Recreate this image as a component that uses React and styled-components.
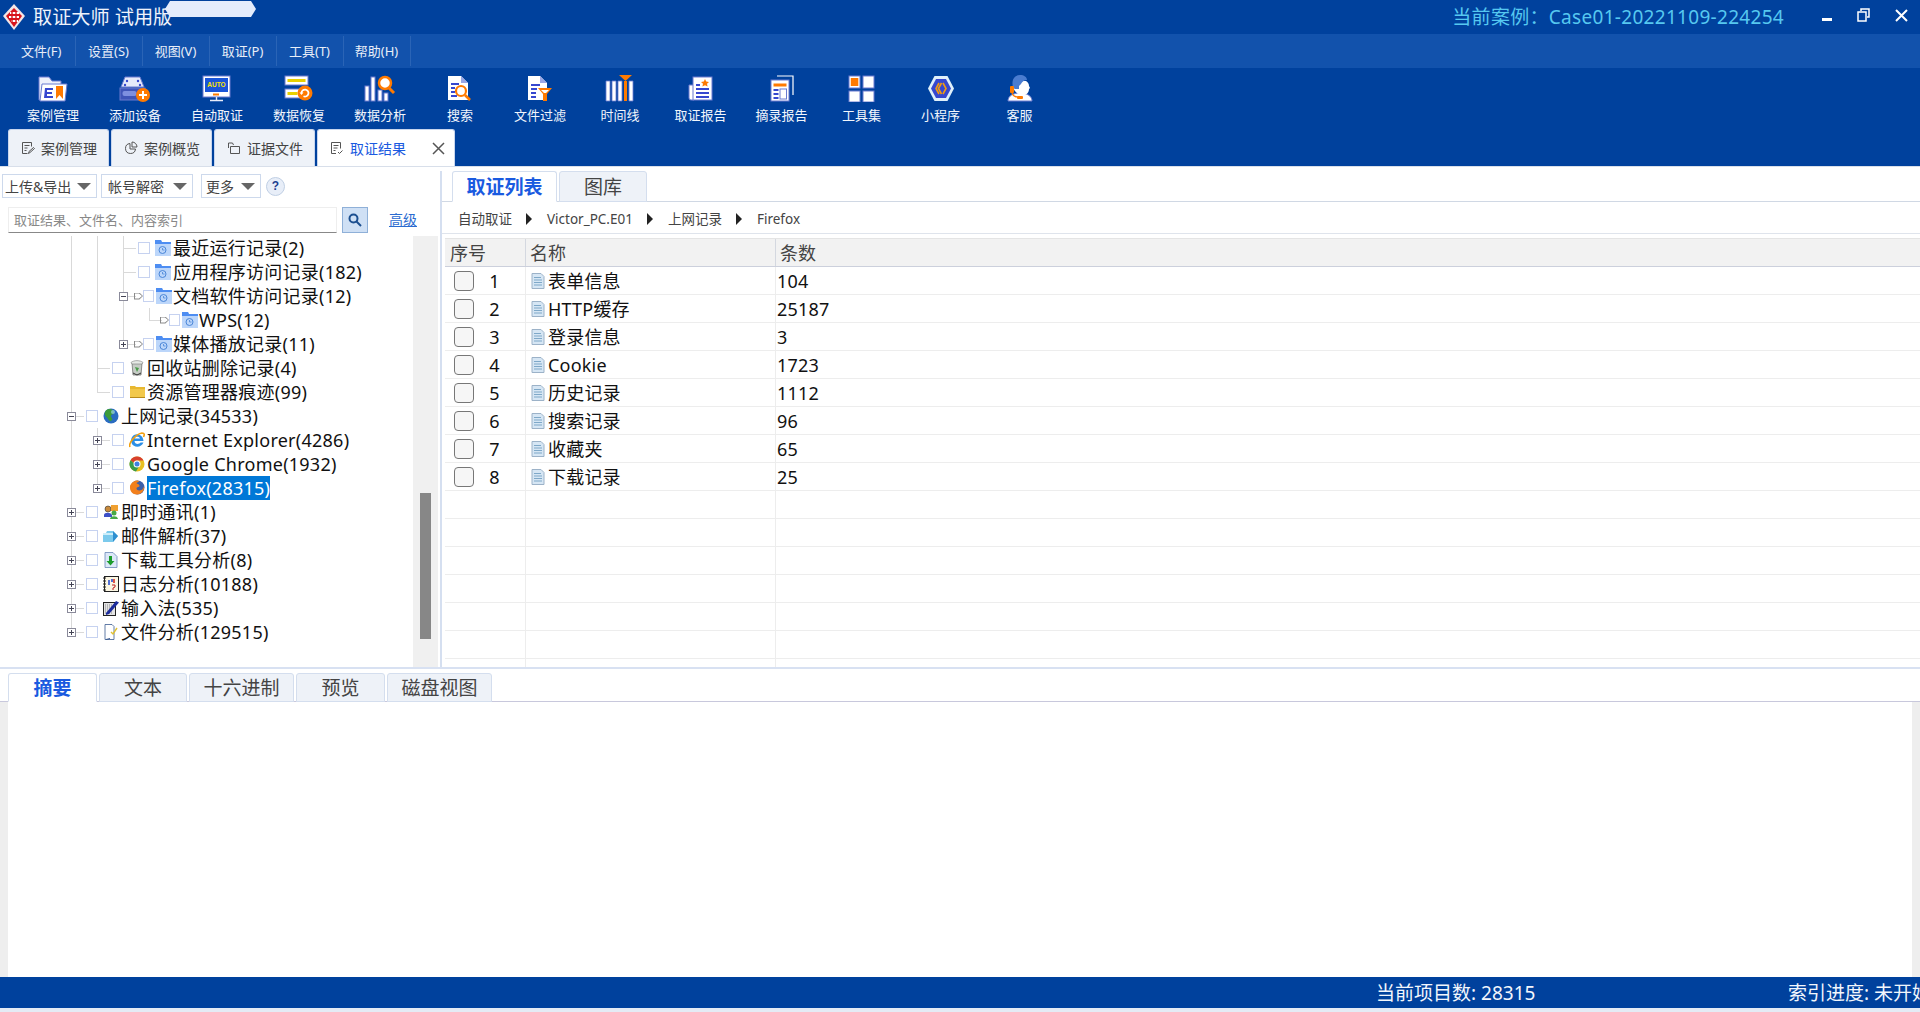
import React from "react";
import styled, { createGlobalStyle } from "styled-components";

const BLUE = "#00419d";
const LINE = "#6a7bd0";
const ORANGE = "#ff7a00";
const INK = "#3647cf";

const GlobalStyle = createGlobalStyle`
  html, body { margin: 0; padding: 0; background: #fff; }
  body { font-family: "Noto Sans", "Noto Sans CJK SC", sans-serif; color: #111; }
  * { box-sizing: border-box; }
`;

const Logo = () => (
  <svg width="24" height="28" viewBox="0 0 24 28">
    <path d="M11 1 L22 13 L11 27 L0 13Z" fill="#f4e6e6" />
    <path d="M11 5 L19 13 L11 24 L3 13Z" fill="#d8141c" />
    <path d="M7 10h9M6 14h10M8 18h7" stroke="#fff" strokeWidth="2" />
    <path d="M9 8v12M13 8v12" stroke="#d8141c" strokeWidth="1.4" />
  </svg>
);

const CaseIcon = () => (
  <svg width="30" height="26" viewBox="0 0 30 26">
    <path d="M1 1H11L14 5H23V24H1Z" fill="#eef1fb" stroke={LINE} />
    <path d="M4 8H29L27 25H2Z" fill="#fff" stroke={LINE} />
    <path d="M7 12h8v2H9v2h5v2H9v2h6v2H6Z" fill={INK} />
    <path d="M18 10h7v13l-3.5-4-3.5 4Z" fill={ORANGE} />
  </svg>
);
const DeviceIcon = () => (
  <svg width="32" height="26" viewBox="0 0 32 26">
    <path d="M6 1H21L25 11H2Z" fill="#e6eafa" stroke={LINE} />
    <circle cx="8" cy="5" r="1.2" fill={INK} />
    <circle cx="19" cy="5" r="1.2" fill={INK} />
    <circle cx="6" cy="9" r="1.2" fill={INK} />
    <circle cx="21" cy="9" r="1.2" fill={INK} />
    <rect x="1" y="12" width="25" height="12" fill="#3f54b8" stroke={LINE} />
    <rect x="3.5" y="15" width="14" height="5" rx="2" fill="#7e8fe0" />
    <circle cx="24" cy="19" r="7" fill={ORANGE} />
    <path d="M24 15v8M20 19h8" stroke="#fff" strokeWidth="2" />
  </svg>
);
const AutoIcon = () => (
  <svg width="30" height="27" viewBox="0 0 30 27">
    <rect x="1" y="1" width="27" height="21" fill="#fff" stroke={LINE} />
    <rect x="3" y="3" width="23" height="14" fill="#1a55d8" />
    <text x="14.5" y="12" fontSize="6.5" fontWeight="700" fill="#ffe400" textAnchor="middle" fontFamily="Liberation Sans, sans-serif">AUTO</text>
    <rect x="11" y="18.5" width="6" height="2" fill={ORANGE} />
    <path d="M14.5 22v3M8 25.5h13" stroke="#e8ecfa" strokeWidth="1.4" />
  </svg>
);
const RecoverIcon = () => (
  <svg width="30" height="27" viewBox="0 0 30 27">
    <rect x="1" y="1" width="23" height="9" fill="#fff" stroke={LINE} />
    <rect x="3.5" y="4" width="18" height="3" fill="#e8d000" />
    <rect x="1" y="14" width="23" height="9" fill="#fff" stroke={LINE} />
    <rect x="3.5" y="17" width="10" height="3" fill="#e8d000" />
    <circle cx="21" cy="18" r="7.5" fill={ORANGE} />
    <path d="M17.5 18a3.5 3.5 0 1 1 2 3.2" fill="none" stroke="#fff" strokeWidth="1.8" />
    <path d="M15.5 17.5h4l-2 2.500Z" fill="#fff" />
  </svg>
);
const AnalysisIcon = () => (
  <svg width="32" height="27" viewBox="0 0 32 27">
    <rect x="1" y="11" width="4" height="15" fill="#fff" stroke={LINE} />
    <rect x="7" y="2" width="4" height="24" fill="#fff" stroke={LINE} />
    <rect x="14" y="15" width="4" height="11" fill="#fff" stroke={LINE} />
    <rect x="20" y="18" width="4" height="8" fill="#fff" stroke={LINE} />
    <circle cx="21" cy="8" r="6" fill="#fff" stroke={ORANGE} strokeWidth="2.5" />
    <path d="M25 13l5 5" stroke={ORANGE} strokeWidth="3" />
  </svg>
);
const SearchDocIcon = () => (
  <svg width="26" height="27" viewBox="0 0 26 27">
    <path d="M1 1H14L21 8V25H1Z" fill="#fff" />
    <path d="M14 1L21 8H14Z" fill="#9aa7e6" />
    <path d="M4 9h8M4 13h4M4 17h4M4 21h6" stroke={INK} strokeWidth="1.8" />
    <circle cx="14" cy="16" r="5" fill="#fff" stroke={ORANGE} strokeWidth="2.2" />
    <path d="M18 20l5 5" stroke={ORANGE} strokeWidth="2.6" />
  </svg>
);
const FilterIcon = () => (
  <svg width="26" height="27" viewBox="0 0 26 27">
    <path d="M1 1H13L20 8V25H1Z" fill="#fff" />
    <path d="M13 1L20 8H13Z" fill="#9aa7e6" />
    <path d="M4 10h9M4 14h6M4 18h5M4 22h5" stroke={INK} strokeWidth="1.8" />
    <path d="M11 13H25L20 19V26H16V19Z" fill={ORANGE} />
    <path d="M14 15H22L19 18H17Z" fill="#fff" />
  </svg>
);
const TimelineIcon = () => (
  <svg width="30" height="27" viewBox="0 0 30 27">
    <path d="M1 6h4v20H1ZM7 6h4v20H7ZM13 6h4v20h-4ZM24 6h4v20h-4Z" fill="#fff" stroke={LINE} strokeWidth="0.8" />
    <rect x="19" y="6" width="3" height="20" fill={ORANGE} />
    <path d="M14 0H27L20.5 6Z" fill={ORANGE} />
  </svg>
);
const ReportIcon = () => (
  <svg width="26" height="27" viewBox="0 0 26 27">
    <path d="M1 10h5v15H3a2 2 0 0 1-2-2Z" fill="#fff" stroke={LINE} />
    <rect x="5" y="2" width="19" height="23" fill="#fff" stroke={LINE} />
    <path d="M8 10h4M8 14h13M8 18h13M8 22h13" stroke={INK} strokeWidth="2" />
    <path d="M17 4l1.2 2.6 2.8.3-2 1.9.6 2.8-2.6-1.4-2.6 1.4.6-2.8-2-1.9 2.8-.3Z" fill={ORANGE} />
  </svg>
);
const ExcerptIcon = () => (
  <svg width="26" height="27" viewBox="0 0 26 27">
    <path d="M8 1H24V20" fill="none" stroke="#fff" strokeWidth="1.2" />
    <rect x="2" y="5" width="18" height="21" fill="#fff" stroke={LINE} />
    <rect x="4.5" y="8.5" width="13" height="3" fill={ORANGE} />
    <path d="M4.5 15h5M4.5 19h5M4.5 23h5" stroke={INK} strokeWidth="2" />
    <rect x="11" y="14" width="6.5" height="10" fill="#fff" stroke={LINE} />
  </svg>
);
const ToolsIcon = () => (
  <svg width="27" height="27" viewBox="0 0 27 27">
    <rect x="1" y="1" width="11" height="12" fill="#fff" stroke={LINE} />
    <rect x="2.8" y="3" width="7.5" height="8" fill={ORANGE} />
    <rect x="15" y="1" width="11" height="12" fill="#fff" stroke={LINE} />
    <rect x="1" y="16" width="11" height="11" fill="#fff" stroke={LINE} />
    <rect x="15" y="16" width="11" height="11" fill="#fff" stroke={LINE} />
  </svg>
);
const MiniIcon = () => (
  <svg width="28" height="27" viewBox="0 0 28 27">
    <path d="M7.5 1H20.5L27 13.5L20.5 26H7.5L1 13.5Z" fill="#dff0fa" />
    <path d="M9 4H19L24 13.5L19 23H9L4 13.5Z" fill="#3647cf" />
    <path d="M12 8L9 13.5L12 19M16 8L19 13.5L16 19M14.5 8L11.5 13.5L14.5 19" fill="none" stroke="#f39a10" strokeWidth="1.6" />
  </svg>
);
const SupportIcon = () => (
  <svg width="26" height="27" viewBox="0 0 26 27">
    <path d="M1 26c0-5 5-8 12-8s12 3 12 8Z" fill="#fff" stroke={LINE} />
    <path d="M6 10c0-3 3-4 7-4h6c2 1 3 3 3 5l1 2-1 1c0 3-2 6-6 6-5 0-10-4-10-10Z" fill="#fff" />
    <path d="M6 13C4 4 8 0 13 0c4 0 7 2 7 5-3 0-5 2-6 4l-2 2v3H8Z" fill="#4a7cd0" />
    <rect x="3" y="11" width="4" height="7" rx="1" fill={ORANGE} />
    <path d="M5 18c1 3 3 4 6 4" fill="none" stroke={ORANGE} strokeWidth="1.2" />
    <rect x="10" y="21" width="6" height="3" rx="1" fill={ORANGE} />
  </svg>
);

const DocTabIcon = () => (
  <svg width="14" height="14" viewBox="0 0 14 14" fill="none" stroke="#555">
    <path d="M1.5 1.5h9v4M1.5 1.5v11h5M3.5 4.5h5M3.5 7h3M3.5 9.5h2" />
    <path d="M7.5 12.5l.5-2 4.5-4 1 1-4.5 4Z" />
  </svg>
);
const PieTabIcon = () => (
  <svg width="14" height="14" viewBox="0 0 14 14" fill="none" stroke="#555">
    <path d="M6 2.5a5 5 0 1 0 5.5 5.5H6Z" />
    <path d="M8 1a5 5 0 0 1 5 5H8Z" />
  </svg>
);
const FolderTabIcon = () => (
  <svg width="14" height="14" viewBox="0 0 14 14" fill="none" stroke="#555">
    <path d="M1.5 7V2h4l1 2M3.5 5.5h9v7h-9Z" />
  </svg>
);
const ResultTabIcon = () => (
  <svg width="14" height="14" viewBox="0 0 14 14" fill="none" stroke="#555">
    <path d="M6 12.5H1.5v-11h9v6M3.5 4.5h5M3.5 7h4M3.5 9.5h2" />
    <path d="M8 11l1.5 1.5 3-3" />
  </svg>
);

const ClockFolder = () => (
  <svg width="16" height="16" viewBox="0 0 16 16">
    <path d="M0 0h6l1 2h9v14H0Z" fill="#bcd6fa" />
    <path d="M0 0h6l1 2h9v2H0Z" fill="#4d8df2" />
    <circle cx="7.5" cy="10" r="3.5" fill="none" stroke="#4a86d8" />
    <path d="M7.5 8v2h2" fill="none" stroke="#4a86d8" strokeWidth="0.8" />
  </svg>
);
const BinIcon = () => (
  <svg width="14" height="16" viewBox="0 0 14 16">
    <path d="M2 3h10l-1 12H3Z" fill="#c6ccc6" stroke="#666" strokeWidth="0.7" />
    <path d="M1 2.5C4 0 10 0 13 2.5L12 4H2Z" fill="#e6eae6" stroke="#777" strokeWidth="0.6" />
    <path d="M5 7l4 1-2 4Z" fill="#4a9c4a" />
    <path d="M3 13l4 2 4-2" fill="none" stroke="#333" />
  </svg>
);
const YellowFolder = () => (
  <svg width="15" height="14" viewBox="0 0 15 14">
    <path d="M0 1h5l1 1h9v11H0Z" fill="#e8b830" />
    <path d="M0 4h15v9H0Z" fill="#f2c84a" />
    <path d="M0 12h15v1H0Z" fill="#b88a1a" />
  </svg>
);
const GlobeIcon = () => (
  <svg width="16" height="16" viewBox="0 0 16 16">
    <circle cx="8" cy="8" r="7.5" fill="#2a6cc0" />
    <path d="M6 1c3 0 6 2 5 4s-3 1-3 3 2 2 1 4-3 1-4-1-2-2-3-4 1-6 4-6Z" fill="#3d9c3a" />
    <circle cx="10" cy="4" r="2" fill="#9ad0f0" opacity="0.7" />
  </svg>
);
const IeIcon = () => (
  <svg width="16" height="16" viewBox="0 0 16 16">
    <path d="M14.5 9H5.5c.2 3 4 4 6 1.5h3C13 14.5 8 16 4.5 13.5S1.5 5 5 3c3.5-2 9-.5 9.5 6Z" fill="#2d8fe6" />
    <path d="M5.5 6.5H11C10.5 4 6 4 5.5 6.5Z" fill="#fff" />
    <path d="M1 15C-1 11 7 2 13 1c3 0 2.500 2 1.500 4" fill="none" stroke="#f2a010" strokeWidth="1.6" />
  </svg>
);
const ChromeIcon = () => (
  <svg width="16" height="16" viewBox="0 0 16 16">
    <circle cx="8" cy="8" r="7.5" fill="#e8c020" />
    <path d="M1.5 4.2A7.5 7.5 0 0 1 14.5 4.5H8a3.5 3.5 0 0 0-3.3 2.3Z" fill="#d8402e" />
    <path d="M1.5 4.2A7.5 7.5 0 0 0 7 15.4L10 10.5 4.7 7Z" fill="#3a9c4a" />
    <circle cx="8" cy="8" r="3.5" fill="#fff" />
    <circle cx="8" cy="8" r="2.5" fill="#3f7fe0" />
  </svg>
);
const FirefoxIcon = () => (
  <svg width="16" height="16" viewBox="0 0 16 16">
    <circle cx="8.5" cy="7.5" r="7" fill="#3c5fa8" />
    <path d="M1 6c1-3 4-5.500 7-5.500 1 0 2 .5 2 1s-1.500.5-2.500 1.500c0 1 2.500 1 3 2.500s-3 1.500-3 3c0 2 3 2.500 5 1.500 1-.5 2-2 2.500-3.500.5 4-2.500 8-7 8S.5 11 1 6Z" fill="#f2801c" />
  </svg>
);
const ChatIcon = () => (
  <svg width="16" height="16" viewBox="0 0 16 16">
    <circle cx="5" cy="5" r="3" fill="#c88a3c" stroke="#333" strokeWidth="0.6" />
    <path d="M1 11c0-3 7-3 8 0v2H1Z" fill="#3d50c8" />
    <rect x="8" y="1" width="7" height="6" fill="#f0a030" />
    <circle cx="11" cy="9" r="2.5" fill="#46a846" />
    <path d="M7 15c0-3 7-4 8 0Z" fill="#46a846" />
  </svg>
);
const MailIcon = () => (
  <svg width="16" height="14" viewBox="0 0 16 14">
    <path d="M0 4h3l1-2h6l5 5-5 6H0Z" fill="#7ccaec" />
    <path d="M0 4h10v2H0Z" fill="#cdeefa" />
    <path d="M10 2l5 5-5 6Z" fill="#2d8fd0" />
  </svg>
);
const DownloadIcon = () => (
  <svg width="14" height="16" viewBox="0 0 14 16">
    <path d="M1 .5H9l4 4V15.5H1Z" fill="#dce8f8" stroke="#6a88b8" strokeWidth="0.8" />
    <path d="M5 4h3v5h2.5L6.5 13.5 2.5 9H5Z" fill="#1c9c2c" />
  </svg>
);
const LogIcon = () => (
  <svg width="16" height="16" viewBox="0 0 16 16">
    <rect x="1.5" y="0.5" width="14" height="15" fill="#fbf6e2" stroke="#222" />
    <path d="M0 2h3M0 5h3M0 8h3M0 11h3M0 14h3" stroke="#222" />
    <path d="M6 4v5M9 3v3" stroke="#2a50d0" strokeWidth="1.6" />
    <path d="M11 3v4" stroke="#d83020" strokeWidth="1.6" />
    <path d="M9 9h3v2l-2 1v2" fill="none" stroke="#c02020" />
  </svg>
);
const InputIcon = () => (
  <svg width="16" height="16" viewBox="0 0 16 16">
    <rect x="0.5" y="2.5" width="12" height="13" fill="#e4e4e4" stroke="#222" />
    <path d="M2 5h8M2 7h8M2 9h8M2 11h8M2 13h8" stroke="#888" strokeDasharray="1 1" />
    <path d="M3 13L13 1l3 1.5L6 14l-3 1Z" fill="#1c2c9c" />
  </svg>
);
const FileIcon = () => (
  <svg width="14" height="16" viewBox="0 0 14 16">
    <path d="M1 .5H8l2 2v13H1Z" fill="#fff" stroke="#3a5a90" strokeWidth="0.8" />
    <path d="M2 15.5l4-1" stroke="#3a5a90" />
    <path d="M7 8l2 2 4-6" fill="none" stroke="#e0c030" strokeWidth="1.4" />
  </svg>
);
const SheetIcon = () => (
  <svg width="14" height="16" viewBox="0 0 14 16">
    <path d="M1 .5H10L13 3.5V15.5H1Z" fill="#d6e6f4" stroke="#9cb2c8" />
    <path d="M3 4.5h7M3 7h8M3 9.5h8M3 12h8" stroke="#7ea8c8" />
  </svg>
);

const tools = [
  { label: "案例管理", w: 82, Icon: CaseIcon },
  { label: "添加设备", w: 82, Icon: DeviceIcon },
  { label: "自动取证", w: 82, Icon: AutoIcon },
  { label: "数据恢复", w: 82, Icon: RecoverIcon },
  { label: "数据分析", w: 80, Icon: AnalysisIcon },
  { label: "搜索", w: 80, Icon: SearchDocIcon },
  { label: "文件过滤", w: 80, Icon: FilterIcon },
  { label: "时间线", w: 80, Icon: TimelineIcon },
  { label: "取证报告", w: 81, Icon: ReportIcon },
  { label: "摘录报告", w: 81, Icon: ExcerptIcon },
  { label: "工具集", w: 79, Icon: ToolsIcon },
  { label: "小程序", w: 79, Icon: MiniIcon },
  { label: "客服", w: 79, Icon: SupportIcon },
];

const menus = ["文件(F)", "设置(S)", "视图(V)", "取证(P)", "工具(T)", "帮助(H)"];

const tree = [
  { guides: 2, conn: "tee", text: "最近运行记录(2)", Icon: ClockFolder },
  { guides: 2, conn: "tee", text: "应用程序访问记录(182)", Icon: ClockFolder },
  { guides: 2, conn: "tee", exp: "-", arrow: true, text: "文档软件访问记录(12)", Icon: ClockFolder },
  { guides: 3, conn: "end", arrow: true, text: "WPS(12)", Icon: ClockFolder },
  { guides: 2, conn: "end", exp: "+", arrow: true, text: "媒体播放记录(11)", Icon: ClockFolder },
  { guides: 1, conn: "tee", text: "回收站删除记录(4)", Icon: BinIcon },
  { guides: 1, conn: "end", text: "资源管理器痕迹(99)", Icon: YellowFolder },
  { guides: 0, conn: "tee", exp: "-", text: "上网记录(34533)", Icon: GlobeIcon },
  { guides: 1, conn: "tee", exp: "+", text: "Internet Explorer(4286)", Icon: IeIcon },
  { guides: 1, conn: "tee", exp: "+", text: "Google Chrome(1932)", Icon: ChromeIcon },
  { guides: 1, conn: "end", exp: "+", text: "Firefox(28315)", Icon: FirefoxIcon, selected: true },
  { guides: 0, conn: "tee", exp: "+", text: "即时通讯(1)", Icon: ChatIcon },
  { guides: 0, conn: "tee", exp: "+", text: "邮件解析(37)", Icon: MailIcon },
  { guides: 0, conn: "tee", exp: "+", text: "下载工具分析(8)", Icon: DownloadIcon },
  { guides: 0, conn: "tee", exp: "+", text: "日志分析(10188)", Icon: LogIcon },
  { guides: 0, conn: "tee", exp: "+", text: "输入法(535)", Icon: InputIcon },
  { guides: 0, conn: "end", exp: "+", text: "文件分析(129515)", Icon: FileIcon },
];

const records = [
  ["表单信息", "104"],
  ["HTTP缓存", "25187"],
  ["登录信息", "3"],
  ["Cookie", "1723"],
  ["历史记录", "1112"],
  ["搜索记录", "96"],
  ["收藏夹", "65"],
  ["下载记录", "25"],
];

const App = () => (
  <Page>
    <GlobalStyle />
    <TitleBar>
      <Logo />
      <AppTitle>取证大师 试用版</AppTitle>
      <Pill />
      <CaseName>当前案例：Case01-20221109-224254</CaseName>
      <WinButtons>
        <svg width="10" height="4" viewBox="0 0 10 4"><rect width="10" height="3" fill="#fff" /></svg>
        <svg width="13" height="14" viewBox="0 0 13 14" fill="none" stroke="#fff" strokeWidth="1.5">
          <path d="M4 3V1h8v8h-2" />
          <rect x="1" y="4" width="8" height="9" />
        </svg>
        <svg width="13" height="13" viewBox="0 0 13 13" fill="none" stroke="#fff" strokeWidth="2">
          <path d="M1 1l11 11M12 1L1 12" />
        </svg>
      </WinButtons>
    </TitleBar>
    <MenuBar>
      {menus.map((m) => (
        <MenuItem key={m}>{m}</MenuItem>
      ))}
    </MenuBar>
    <Ribbon>
      <ToolRow>
        {tools.map(({ label, w, Icon }) => (
          <ToolItem key={label} $w={w}>
            <ToolIcon><Icon /></ToolIcon>
            <ToolLabel>{label}</ToolLabel>
          </ToolItem>
        ))}
      </ToolRow>
      <TabRow>
        <PageTab><DocTabIcon />案例管理</PageTab>
        <PageTab><PieTabIcon />案例概览</PageTab>
        <PageTab><FolderTabIcon />证据文件</PageTab>
        <PageTab $active>
          <ResultTabIcon />取证结果
          <TabClose width="13" height="13" viewBox="0 0 13 13" fill="none" stroke="#555" strokeWidth="1.5">
            <path d="M1 1l11 11M12 1L1 12" />
          </TabClose>
        </PageTab>
      </TabRow>
    </Ribbon>

    <Main>
      <LeftPanel>
        <LeftTools>
          <DropButton $w={95} $pad={2}>上传&amp;导出<Caret /></DropButton>
          <DropButton $w={92} $pad={6}>帐号解密<Caret /></DropButton>
          <DropButton $w={60} $pad={4} $push={4}>更多<Caret /></DropButton>
          <HelpDot>?</HelpDot>
        </LeftTools>
        <SearchRow>
          <SearchInput>取证结果、文件名、内容索引</SearchInput>
          <SearchButton>
            <svg width="14" height="14" viewBox="0 0 14 14" fill="none" stroke="#1c4f90" strokeWidth="2">
              <circle cx="5.5" cy="5.5" r="4" />
              <path d="M8.5 8.5l4.5 4.5" />
            </svg>
          </SearchButton>
          <AdvancedLink>高级</AdvancedLink>
        </SearchRow>
        <TreeWrap>
          <Tree>
            {tree.map((row) => (
              <TreeRow key={row.text}>
                {Array.from({ length: row.guides }).map((_, i) => (
                  <GuideCell key={i} />
                ))}
                <ConnectorCell $kind={row.conn}>
                  {row.exp && <Expander $minus={row.exp === "-"} />}
                </ConnectorCell>
                {row.arrow && <PointerTag />}
                <TreeCheck $tight={row.arrow} />
                <TreeIcon $tight={row.arrow}><row.Icon /></TreeIcon>
                <TreeText $tight={row.arrow} $selected={row.selected}>{row.text}</TreeText>
              </TreeRow>
            ))}
          </Tree>
          <ScrollTrack><ScrollThumb /></ScrollTrack>
        </TreeWrap>
      </LeftPanel>
      <Splitter />
      <RightPanel>
        <ListTabs>
          <ListTab $active $w={105}>取证列表</ListTab>
          <ListTab $w={88}>图库</ListTab>
        </ListTabs>
        <Crumbs>
          <Crumb>自动取证</Crumb>
          <CrumbArrow />
          <Crumb>Victor_PC.E01</Crumb>
          <CrumbArrow />
          <Crumb>上网记录</Crumb>
          <CrumbArrow />
          <Crumb>Firefox</Crumb>
        </Crumbs>
        <Table>
          <HeadRow>
            <NumCell $head>序号</NumCell>
            <NameCell $head>名称</NameCell>
            <CountCell $head>条数</CountCell>
          </HeadRow>
          {records.map(([name, count], i) => (
            <BodyRow key={name}>
              <NumCell>
                <RowCheck />
                <RowNum>{i + 1}</RowNum>
              </NumCell>
              <NameCell>
                <SheetIcon />
                <NameText>{name}</NameText>
              </NameCell>
              <CountCell>{count}</CountCell>
            </BodyRow>
          ))}
          {Array.from({ length: 7 }).map((_, i) => (
            <BodyRow key={i}>
              <NumCell />
              <NameCell />
              <CountCell />
            </BodyRow>
          ))}
        </Table>
      </RightPanel>
    </Main>

    <HSplitter />

    <Bottom>
      <DetailTabs>
        <DetailTab $active $w={89}>摘要</DetailTab>
        <DetailTab $w={88}>文本</DetailTab>
        <DetailTab $w={105}>十六进制</DetailTab>
        <DetailTab $w={89}>预览</DetailTab>
        <DetailTab $w={105}>磁盘视图</DetailTab>
      </DetailTabs>
      <DetailBody />
    </Bottom>

    <StatusBar>
      <StatusCount>当前项目数: 28315</StatusCount>
      <StatusProgress>索引进度: 未开始</StatusProgress>
    </StatusBar>
    <BottomStrip />
  </Page>
);

export default App;

const Page = styled.div`
  position: relative;
  width: 1920px;
  height: 1012px;
  overflow: hidden;
  display: flex;
  flex-direction: column;
`;

const TitleBar = styled.div`
  height: 34px;
  flex: none;
  background: ${BLUE};
  display: flex;
  align-items: center;
  padding-left: 3px;
`;
const AppTitle = styled.div`
  margin-left: 6px;
  font-size: 19.2px;
  line-height: 34px;
  color: #eef3fb;
  white-space: pre;
`;
const Pill = styled.div`
  position: absolute;
  left: 165px;
  top: 1px;
  width: 91px;
  height: 16px;
  background: #e4ecfc;
  clip-path: polygon(5px 0, calc(100% - 5px) 0, 100% 50%, calc(100% - 5px) 100%, 5px 100%, 0 50%);
`;
const CaseName = styled.div`
  margin-left: auto;
  font-size: 19px;
  line-height: 34px;
  letter-spacing: 0.3px;
  color: #56c8f0;
  white-space: nowrap;
`;
const WinButtons = styled.div`
  display: flex;
  align-items: center;
  width: 136px;
  padding: 0 12px 0 38px;
  justify-content: space-between;
  margin-top: -4px;
  svg:first-child {
    margin-top: 10px;
  }
`;

const MenuBar = styled.div`
  height: 34px;
  flex: none;
  background: #1252ac;
  display: flex;
  padding: 2px 0 2px 8px;
`;
const MenuItem = styled.div`
  width: 67px;
  font-size: 13px;
  line-height: 30px;
  color: #e8eef8;
  text-align: center;
  border-right: 1px solid #2a64b6;
  &:first-child {
    width: 67.5px;
  }
`;

const Ribbon = styled.div`
  height: 98px;
  flex: none;
  background: ${BLUE};
  display: flex;
  flex-direction: column;
`;
const ToolRow = styled.div`
  height: 61px;
  display: flex;
  padding: 7px 0 0 12px;
`;
const ToolItem = styled.div`
  width: ${(p) => p.$w}px;
  display: flex;
  flex-direction: column;
  align-items: center;
`;
const ToolIcon = styled.div`
  height: 27px;
  display: flex;
  align-items: center;
  justify-content: center;
`;
const ToolLabel = styled.div`
  margin-top: 4px;
  font-size: 13px;
  line-height: 18px;
  color: #f2f6fc;
  white-space: nowrap;
`;
const TabRow = styled.div`
  height: 37px;
  display: flex;
  gap: 2px;
  padding-left: 8px;
`;
const PageTab = styled.div`
  width: ${(p) => (p.$active ? 138 : 101)}px;
  background: ${(p) => (p.$active ? "#fff" : "#eef2f8")};
  border-radius: 3px 3px 0 0;
  border: 1px solid #c8d6ee;
  border-bottom: none;
  display: flex;
  align-items: center;
  gap: 6px;
  padding-left: 12px;
  font-size: 14px;
  color: ${(p) => (p.$active ? "#1a5ae0" : "#444")};
  white-space: nowrap;
`;
const TabClose = styled.svg`
  margin-left: 20px;
`;

const Main = styled.div`
  height: 501px;
  flex: none;
  display: flex;
  border-top: 1px solid #d8dfea;
`;
const LeftPanel = styled.div`
  width: 440px;
  flex: none;
  display: flex;
  flex-direction: column;
`;
const LeftTools = styled.div`
  height: 24px;
  margin-top: 7px;
  display: flex;
  gap: 4px;
  padding-left: 2px;
`;
const DropButton = styled.div`
  width: ${(p) => p.$w}px;
  height: 24px;
  margin-left: ${(p) => p.$push || 0}px;
  border: 1px solid #cdd9ec;
  display: flex;
  align-items: center;
  justify-content: space-between;
  padding: 1px 5px 0 ${(p) => p.$pad}px;
  font-size: 14px;
  line-height: 22px;
  color: #444;
  white-space: nowrap;
`;
const Caret = styled.span`
  width: 0;
  height: 0;
  border-left: 7px solid transparent;
  border-right: 7px solid transparent;
  border-top: 7px solid #666;
`;
const HelpDot = styled.div`
  width: 19px;
  height: 19px;
  margin: 3px 0 0 1px;
  border-radius: 50%;
  background: #e8eef8;
  border: 1px solid #c0cfe4;
  color: #1c3f90;
  font-family: "Liberation Sans", sans-serif;
  font-size: 12px;
  font-weight: 700;
  line-height: 17px;
  text-align: center;
`;
const SearchRow = styled.div`
  height: 27px;
  margin-top: 8px;
  display: flex;
  align-items: center;
  padding-left: 8px;
`;
const SearchInput = styled.div`
  width: 329px;
  height: 26px;
  border: 1px solid #eee;
  border-bottom: 1px solid #888;
  padding-left: 5px;
  font-size: 13px;
  line-height: 24px;
  color: #888;
`;
const SearchButton = styled.div`
  width: 26px;
  height: 26px;
  margin-left: 5px;
  background: #cfe0f5;
  border: 1px solid #8fb0d8;
  display: flex;
  align-items: center;
  justify-content: center;
`;
const AdvancedLink = styled.div`
  margin-left: 21px;
  font-size: 14px;
  line-height: 20px;
  color: #2b6bd0;
  text-decoration: underline;
`;
const TreeWrap = styled.div`
  flex: 1;
  min-height: 0;
  margin-top: 3px;
  display: flex;
`;
const Tree = styled.div`
  width: 413px;
  padding-left: 58px;
`;
const TreeRow = styled.div`
  height: 24px;
  display: flex;
  align-items: center;
`;
const GuideCell = styled.div`
  width: 26px;
  height: 24px;
  flex: none;
  background: linear-gradient(#d9d9d9, #d9d9d9) no-repeat 13px 0 / 1px 100%;
`;
const ConnectorCell = styled.div`
  width: 26px;
  height: 24px;
  flex: none;
  display: flex;
  align-items: center;
  padding-left: 9px;
  background:
    linear-gradient(#d9d9d9, #d9d9d9) no-repeat 13px 0 / 1px ${(p) => (p.$kind === "end" ? "50%" : "100%")},
    linear-gradient(#d9d9d9, #d9d9d9) no-repeat 13px 50% / 13px 1px;
`;
const Expander = styled.div`
  width: 9px;
  height: 9px;
  background:
    linear-gradient(#445, #445) no-repeat center / 5px 1px,
    ${(p) => (p.$minus ? "" : "linear-gradient(#445, #445) no-repeat center / 1px 5px,")}
    #fff;
  border: 1px solid #8a8a9a;
`;
const PointerTag = styled.div`
  width: 9px;
  height: 7px;
  flex: none;
  margin-left: -2px;
  background: #8a8a8a;
  clip-path: polygon(0 0, 60% 0, 100% 50%, 60% 100%, 0 100%, 0 0, 1px 1px, 1px calc(100% - 1px), 55% calc(100% - 1px), calc(100% - 1px) 50%, 55% 1px, 1px 1px);
`;
const TreeCheck = styled.div`
  width: ${(p) => (p.$tight ? 11 : 12)}px;
  height: 12px;
  flex: none;
  margin-left: ${(p) => (p.$tight ? 0 : 2)}px;
  border: 1px solid #c6d2f0;
  background: #fff;
`;
const TreeIcon = styled.div`
  width: 16px;
  height: 16px;
  flex: none;
  margin-left: ${(p) => (p.$tight ? 2 : 5)}px;
  display: flex;
  align-items: center;
  justify-content: center;
`;
const TreeText = styled.div`
  margin-left: ${(p) => (p.$tight ? 1 : 2)}px;
  height: 24px;
  font-size: 18px;
  line-height: 24px;
  letter-spacing: 0.25px;
  white-space: nowrap;
  color: ${(p) => (p.$selected ? "#fff" : "#111")};
  background: ${(p) => (p.$selected ? "#0078d7" : "transparent")};
`;
const ScrollTrack = styled.div`
  width: 25px;
  background: #f0f0f0;
  padding: 257px 0 0 7px;
`;
const ScrollThumb = styled.div`
  width: 11px;
  height: 146px;
  background: #878787;
`;
const Splitter = styled.div`
  width: 2px;
  flex: none;
  background: #d5dff0;
  margin-top: 4px;
`;
const RightPanel = styled.div`
  flex: 1;
  min-width: 0;
  display: flex;
  flex-direction: column;
  overflow: hidden;
`;
const ListTabs = styled.div`
  height: 35px;
  flex: none;
  display: flex;
  align-items: flex-end;
  gap: 2px;
  padding-left: 10px;
  border-bottom: 1px solid #d0d8e4;
`;
const ListTab = styled.div`
  width: ${(p) => p.$w}px;
  height: 31px;
  margin-bottom: -1px;
  border: 1px solid #d4deee;
  border-bottom: ${(p) => (p.$active ? "1px solid #fff" : "1px solid #d4deee")};
  border-radius: 3px 3px 0 0;
  background: ${(p) => (p.$active ? "#fff" : "#eef2f8")};
  color: ${(p) => (p.$active ? "#1a5ae0" : "#444")};
  font-weight: ${(p) => (p.$active ? 700 : 400)};
  font-size: 19px;
  line-height: 30px;
  text-align: center;
`;
const Crumbs = styled.div`
  height: 32px;
  flex: none;
  display: flex;
  align-items: center;
  padding: 2px 0 0 16px;
  border-bottom: 1px solid #dfe4ec;
`;
const Crumb = styled.div`
  font-size: 13.5px;
  line-height: 18px;
  color: #444;
`;
const CrumbArrow = styled.span`
  width: 0;
  height: 0;
  margin: 0 15px 0 14px;
  border-top: 6px solid transparent;
  border-bottom: 6px solid transparent;
  border-left: 6px solid #222;
`;
const Table = styled.div`
  flex: 1;
  min-height: 0;
  margin: 4px 0 0 3px;
  overflow: hidden;
`;
const HeadRow = styled.div`
  height: 29px;
  display: flex;
  background: #f2f2f2;
  border-top: 1px solid #e4e4e4;
  border-bottom: 1px solid #ccd0dc;
  font-size: 18px;
  line-height: 26px;
  color: #444;
`;
const BodyRow = styled.div`
  height: 28px;
  display: flex;
  border-bottom: 1px solid #ededed;
  font-size: 18px;
  line-height: 26px;
  letter-spacing: 0.2px;
  color: #111;
`;
const NumCell = styled.div`
  width: 81px;
  flex: none;
  display: flex;
  align-items: center;
  padding: ${(p) => (p.$head ? "0 0 0 5px" : "1px 0 0 9px")};
  border-right: 1px solid ${(p) => (p.$head ? "#d4d8e0" : "#ededed")};
`;
const NameCell = styled.div`
  width: 250px;
  flex: none;
  display: flex;
  align-items: center;
  padding: ${(p) => (p.$head ? "0 0 0 4px" : "1px 0 0 5px")};
  border-right: 1px solid ${(p) => (p.$head ? "#d4d8e0" : "#ededed")};
`;
const CountCell = styled.div`
  flex: 1;
  display: flex;
  align-items: center;
  padding: ${(p) => (p.$head ? "0 0 0 4px" : "1px 0 0 1px")};
`;
const RowCheck = styled.div`
  width: 20px;
  height: 20px;
  flex: none;
  border: 1px solid #777;
  border-radius: 4px;
  background: #f6f6f6;
`;
const RowNum = styled.div`
  width: 41px;
  text-align: center;
`;
const NameText = styled.div`
  margin-left: 3px;
`;

const HSplitter = styled.div`
  height: 2px;
  flex: none;
  background: #d8e1f2;
`;

const Bottom = styled.div`
  height: 308px;
  flex: none;
  display: flex;
  flex-direction: column;
`;
const DetailTabs = styled.div`
  height: 33px;
  flex: none;
  display: flex;
  align-items: flex-end;
  gap: 2px;
  padding-left: 8px;
  border-bottom: 1px solid #c8c8dc;
`;
const DetailTab = styled.div`
  width: ${(p) => p.$w}px;
  height: 29px;
  margin-bottom: -1px;
  border: 1px solid #d4deee;
  border-bottom: ${(p) => (p.$active ? "1px solid #fff" : "1px solid #d4deee")};
  border-radius: 3px 3px 0 0;
  background: ${(p) => (p.$active ? "#fff" : "#eef2f8")};
  color: ${(p) => (p.$active ? "#1a5ae0" : "#444")};
  font-weight: ${(p) => (p.$active ? 700 : 400)};
  font-size: 19px;
  line-height: 29px;
  text-align: center;
`;
const DetailBody = styled.div`
  flex: 1;
  background: #fff;
  border-left: 8px solid #eee;
  border-right: 8px solid #eee;
`;

const StatusBar = styled.div`
  height: 31px;
  flex: none;
  background: ${BLUE};
  display: flex;
  align-items: center;
  overflow: hidden;
  padding-top: 1px;
  color: #f2f6fc;
  font-size: 19px;
  line-height: 26px;
  white-space: nowrap;
`;
const StatusCount = styled.div`
  margin-left: 1376px;
  width: 412px;
  flex: none;
`;
const StatusProgress = styled.div`
  flex: none;
`;
const BottomStrip = styled.div`
  height: 4px;
  flex: none;
  background: #e4ebf5;
`;
